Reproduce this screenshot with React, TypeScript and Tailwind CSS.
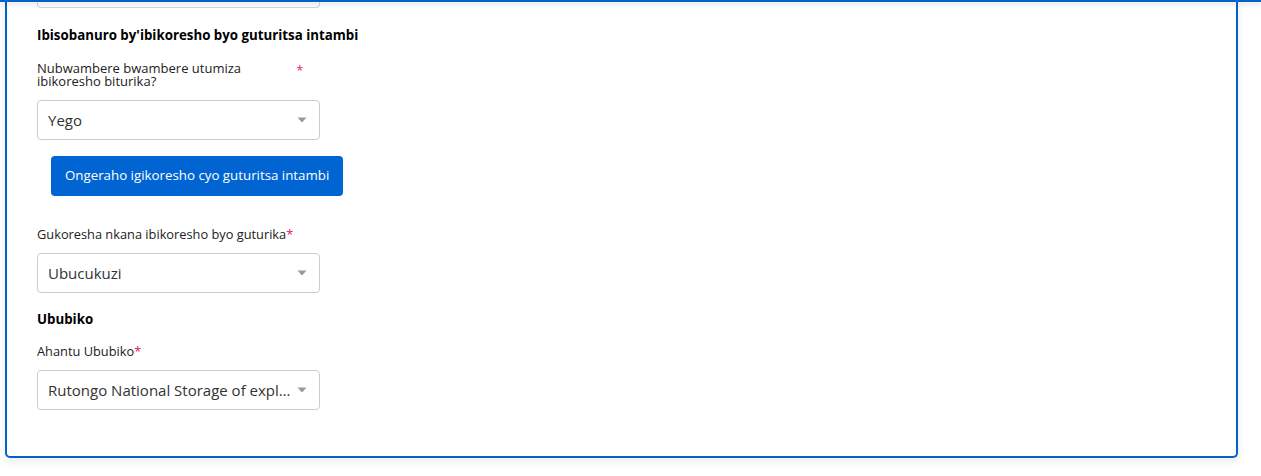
import React from "react";

const font = { fontFamily: "'Open Sans', 'Noto Sans', sans-serif" };

function Caret() {
  return (
    <svg width="10" height="6" viewBox="0 0 10 6" className="shrink-0">
      <path d="M0.5 0.5 L9.5 0.5 L5 5.5 Z" fill="#999" />
    </svg>
  );
}

function Select({ value }: { value: string }) {
  return (
    <div className="flex h-[40px] w-[283px] items-center rounded-[4px] border border-[#cccccc] bg-white pl-[10px] pr-[12px]">
      <span className="flex-1 truncate pr-[4px] text-[15px] text-[#333]">{value}</span>
      <Caret />
    </div>
  );
}

function Star() {
  return <span className="text-[#e5195f]">*</span>;
}

export default function App() {
  return (
    <div className="relative h-[476px] w-[1261px] overflow-hidden bg-white" style={font}>
      <div className="absolute left-0 right-0 top-0 z-10 h-[2px] bg-[#0062cc] shadow-[0_2px_5px_rgba(0,0,0,0.18)]" />
      <div className="ml-[5px] w-[1233px] rounded-b-[5px] border-x-2 border-b-2 border-[#0062cc] bg-white pb-[46px] pl-[30px] shadow-[0_4px_10px_rgba(0,0,0,0.08)]">
        <div className="h-[8px] w-[283px] rounded-b-[4px] border-x border-b border-[#d6d6d6]" />
        <h3 className="mt-[17px] text-[13.3px] font-bold leading-[20px] text-black">
          Ibisobanuro by'ibikoresho byo guturitsa intambi
        </h3>
        <div className="mt-[17px] flex w-[266px] items-start justify-between text-[13px] leading-[13px] text-[#222]">
          <span>
            Nubwambere bwambere utumiza
            <br />
            ibikoresho biturika?
          </span>
          <span className="mt-[2px] text-[12px] text-[#e5195f]">*</span>
        </div>
        <div className="mt-[12px]">
          <Select value="Yego" />
        </div>
        <button className="ml-[14px] mt-[16px] h-[40px] rounded-[4px] bg-[#0065d3] px-[14px] text-[13.3px] text-white">
          Ongeraho igikoresho cyo guturitsa intambi
        </button>
        <div className="mt-[28px] text-[12.8px] leading-[20px] text-[#222]">
          Gukoresha nkana ibikoresho byo guturika<Star />
        </div>
        <div className="mt-[9px]">
          <Select value="Ubucukuzi" />
        </div>
        <h3 className="mt-[16px] text-[13.3px] font-bold leading-[20px] text-black">Ububiko</h3>
        <div className="mt-[12px] text-[12.8px] leading-[20px] text-[#222]">
          Ahantu Ububiko<Star />
        </div>
        <div className="mt-[9px]">
          <Select value="Rutongo National Storage of explosives" />
        </div>
      </div>
    </div>
  );
}
